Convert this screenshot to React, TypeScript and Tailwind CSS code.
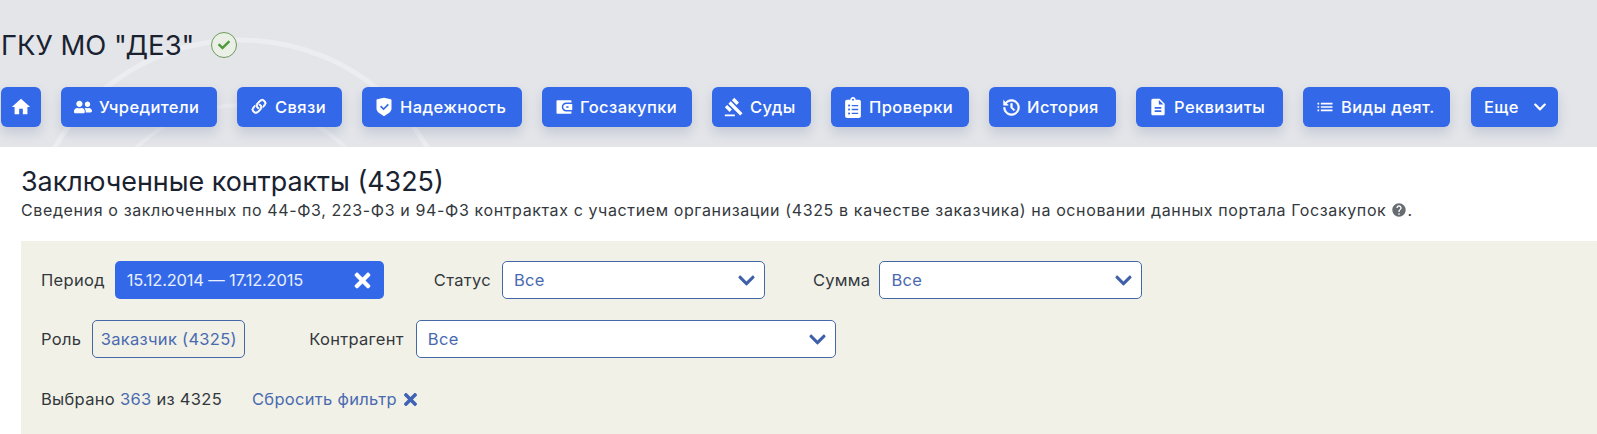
import { BsLink45Deg } from "react-icons/bs";
import { FaCheck, FaChevronDown, FaClipboardList, FaTimes, FaUserFriends } from "react-icons/fa";
import { MdDescription, MdGavel, MdHelp, MdHome, MdList } from "react-icons/md";
import { RiHistoryFill, RiShieldCheckFill, RiWallet3Fill } from "react-icons/ri";

const navItems = [
  { label: "Учредители", width: "w-[156px]", icon: <FaUserFriends size={18} /> },
  { label: "Связи", width: "w-[105px]", icon: <BsLink45Deg size={22} className="stroke-[0.7px]" /> },
  { label: "Надежность", width: "w-[160px]", icon: <RiShieldCheckFill size={20} /> },
  { label: "Госзакупки", width: "w-[150px]", icon: <RiWallet3Fill size={18} /> },
  { label: "Суды", width: "w-[99px]", icon: <MdGavel size={22} /> },
  { label: "Проверки", width: "w-[138px]", icon: <FaClipboardList size={21} /> },
  { label: "История", width: "w-[127px]", icon: <RiHistoryFill size={19} className="stroke-[0.8px]" /> },
  { label: "Реквизиты", width: "w-[147px]", icon: <MdDescription size={20} /> },
  { label: "Виды деят.", width: "w-[147px]", icon: <MdList size={20} /> },
];

function NavButton({ children, className = "" }: { children: React.ReactNode; className?: string }) {
  return (
    <button className={`flex items-center h-10 rounded-md bg-[#3369e8] text-white text-[16.5px] tracking-[0.4px] font-medium shadow-[0_6px_12px_rgba(60,80,120,0.18)] whitespace-nowrap ${className}`}>
      {children}
    </button>
  );
}

function Select({ width }: { width: string }) {
  return (
    <div className={`flex items-center justify-between h-[38px] pl-[11px] pr-2 bg-white border border-[#4468a8] rounded-[5px] text-[#4a6ab0] ${width}`}>
      <span className="pt-px">Все</span>
      <FaChevronDown size={19} className="text-[#3f5fa8]" />
    </div>
  );
}

export default function App() {
  return (
    <div className="h-[434px] overflow-hidden bg-white font-['Inter',sans-serif] text-[16.5px] tracking-[0.3px] text-[#33383d]">
      <header className="relative h-[147px] bg-[#e3e5e9] overflow-hidden">
        <svg className="absolute inset-0 w-full h-full" viewBox="0 0 1597 147" fill="none">
          <circle cx="241" cy="255" r="215" stroke="#ebedf0" strokeWidth="5" />
          <circle cx="241" cy="255" r="150" stroke="#e9ebee" strokeWidth="4" />
        </svg>
        <div className="relative pt-[25px]">
          <div className="flex items-center h-10">
            <h1 className="text-[27.5px] tracking-normal leading-10 text-[#1a2230] pl-px">ГКУ МО "ДЕЗ"</h1>
            <span className="flex items-center justify-center w-[26px] h-[26px] ml-[17px] rounded-full border border-[#6f9a5e] bg-[#eaf0e6] text-[#4f9a3c]">
              <FaCheck size={12} />
            </span>
          </div>
          <nav className="flex gap-5 pl-px mt-[22px]">
            <NavButton className="justify-center w-10">
              <MdHome size={22} />
            </NavButton>
            {navItems.map((item) => (
              <NavButton key={item.label} className={`pl-[12px] ${item.width}`}>
                <span className="flex items-center justify-center w-5 mr-[6px]">{item.icon}</span>
                {item.label}
              </NavButton>
            ))}
            <NavButton className="pl-[13px] w-[87px] ml-px">
              Еще
              <FaChevronDown size={14} className="ml-[14px]" />
            </NavButton>
          </nav>
        </div>
      </header>

      <section className="pl-[21px] pt-[20px]">
        <h2 className="text-[26.9px] tracking-normal leading-[28px] text-[#1a2230]">Заключенные контракты (4325)</h2>
        <p className="flex items-center text-[16px] tracking-[0.62px] leading-5 mt-[5px]">
          Сведения о заключенных по 44-ФЗ, 223-ФЗ и 94-ФЗ контрактах с участием организации (4325 в качестве заказчика) на основании данных портала Госзакупок
          <MdHelp size={16} className="ml-[5px] text-[#666c72]" />.
        </p>

        <div className="mt-[21px] h-[193px] bg-[#f1f1e7] pl-5 pt-5">
          <div className="flex items-center">
            <span className="pt-px">Период</span>
            <div className="flex items-center justify-between w-[269px] h-[38px] ml-[10px] px-3 rounded-[5px] bg-[#3369e8] text-[#e8efff] tracking-[-0.2px]">
              <span className="pt-px">15.12.2014 — 17.12.2015</span>
              <FaTimes size={23} className="text-white -mr-[2px]" />
            </div>
            <span className="ml-[50px] pt-px">Статус</span>
            <div className="ml-[11px]"><Select width="w-[263px]" /></div>
            <span className="ml-[48px] pt-px">Сумма</span>
            <div className="ml-[9px]"><Select width="w-[263px]" /></div>
          </div>

          <div className="flex items-center mt-[21px]">
            <span className="pt-px">Роль</span>
            <div className="flex items-center h-[38px] w-[153px] ml-[11px] justify-center border border-[#4468a8] rounded-[5px] text-[#4a6ab0]">
              <span className="pt-px">Заказчик (4325)</span>
            </div>
            <span className="ml-[64px] pt-px">Контрагент</span>
            <div className="ml-[12px]"><Select width="w-[420px]" /></div>
          </div>

          <div className="flex items-center mt-[29px]">
            <span>
              Выбрано <span className="text-[#4a6ab0]">363</span> из 4325
            </span>
            <span className="flex items-center ml-[30px] text-[#4a6ab0]">
              Сбросить фильтр
              <FaTimes size={19} className="ml-[4px] text-[#3f62b5]" />
            </span>
          </div>
        </div>
      </section>
    </div>
  );
}
